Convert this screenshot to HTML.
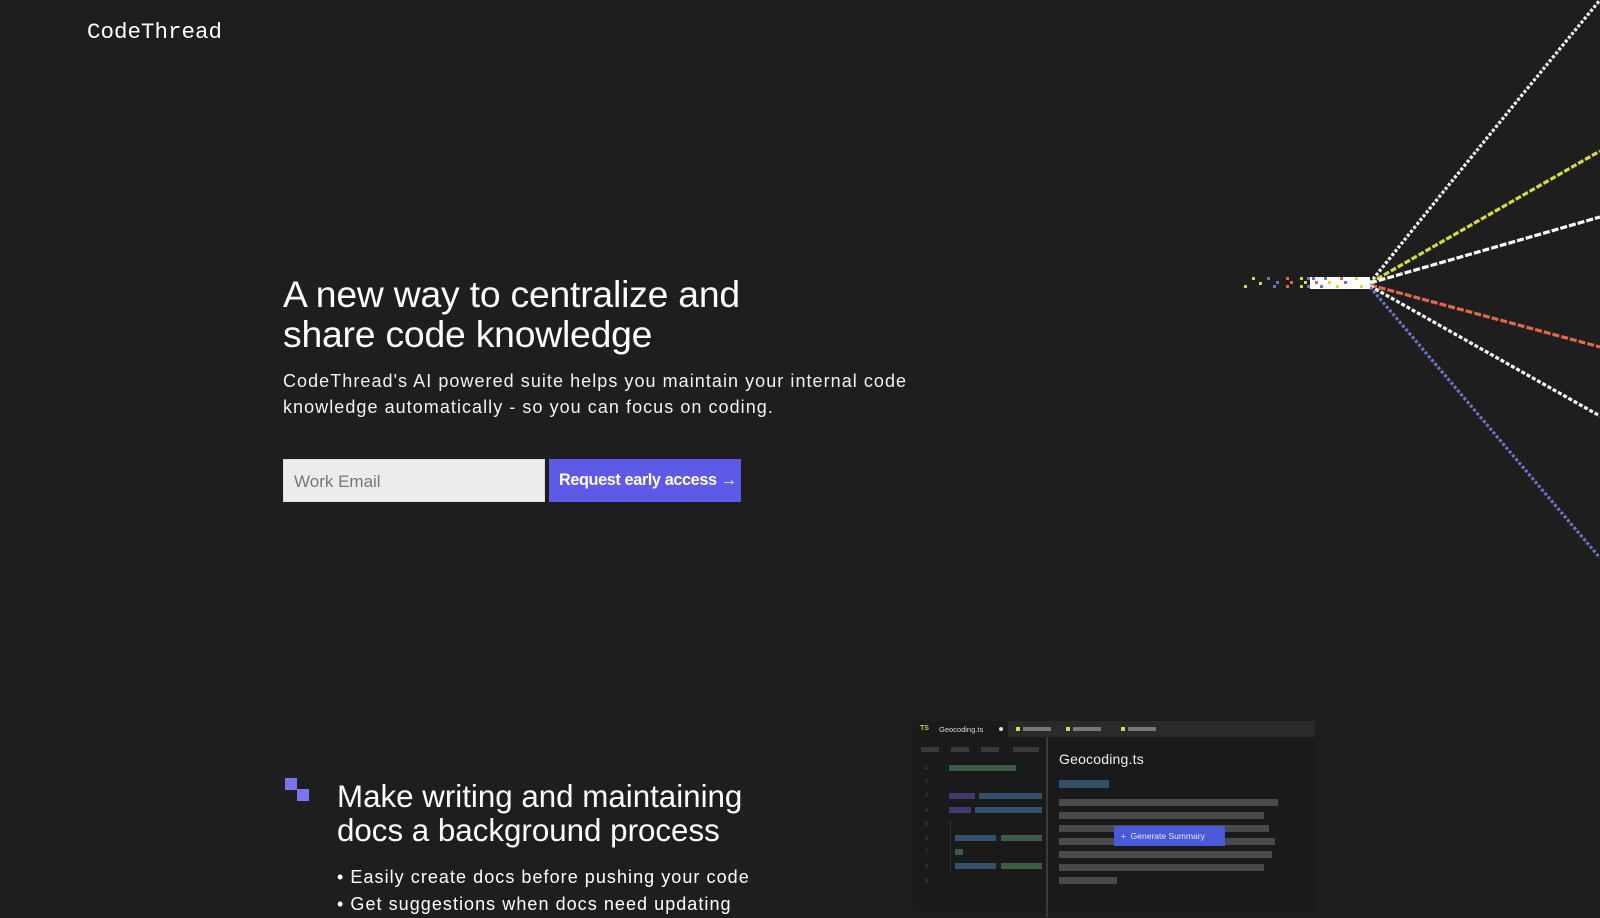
<!DOCTYPE html>
<html><head><meta charset="utf-8"><style>
*{margin:0;padding:0;box-sizing:border-box}
body{width:1600px;height:900px;overflow:hidden;background:#1e1e1e;color:#fff;font-family:"Liberation Sans",Arial,sans-serif;position:relative}
.abs{position:absolute}
.logo{left:87px;top:19px;font-family:"Liberation Mono",monospace;font-size:22.5px;letter-spacing:0px;color:#fff}
h1{position:absolute;left:283px;top:274px;font-size:37.3px;font-weight:400;line-height:40px;letter-spacing:-0.2px}
.p{left:283px;top:368px;font-size:18px;line-height:26px;letter-spacing:1.05px;color:#f2f2f2}
.inp{left:283px;top:459px;width:262px;height:43px;background:#ececec;border:1px solid #ddd;color:#777;font-size:17px;padding:12px 10px}
.btn{left:549px;top:459px;width:192px;height:43px;background:#5d5ae8;color:#fff;font-weight:700;font-size:16.3px;padding:12px 0 0 10px;letter-spacing:-0.4px;white-space:nowrap}
h2{position:absolute;left:337px;top:780px;font-size:31.3px;font-weight:400;line-height:34px}
.b{left:337px;top:864px;font-size:18px;line-height:27px;letter-spacing:1.05px;white-space:nowrap}
.panel{left:913px;top:721px;width:402px;height:190px;background:#1a1a1a}
.bar{position:absolute;height:7px;background:#4a4a4a}
</style></head><body>
<div class="abs logo">CodeThread</div>
<h1>A new way to centralize and<br>share code knowledge</h1>
<div class="abs p">CodeThread's AI powered suite helps you maintain your internal code<br>knowledge automatically - so you can focus on coding.</div>
<div class="abs inp">Work Email</div>
<div class="abs btn">Request early access →</div>

<svg class="abs" style="left:0;top:0" width="1600" height="600">
<g fill="none" stroke-width="3.2">
<path d="M1370 283 Q1460 170 1600 0" stroke="#fff" stroke-dasharray="3 2"/>
<path d="M1370 283 L1600 151" stroke="#d4d94a" stroke-dasharray="6 2"/>
<path d="M1370 283 L1600 217" stroke="#fff" stroke-dasharray="7 2"/>
<path d="M1370 285 L1600 347" stroke="#e0684a" stroke-dasharray="7 2"/>
<path d="M1370 286 L1600 416" stroke="#fff" stroke-dasharray="4 2"/>
<path d="M1370 287 L1600 558" stroke="#6a72c8" stroke-dasharray="3 2"/>
</g>
<rect x="1310" y="277" width="60" height="12" fill="#fff"/>
<g>
<rect x="1312" y="277" width="3" height="3" fill="#6a72c8"/><rect x="1315" y="281" width="3" height="3" fill="#e0684a"/><rect x="1324" y="277" width="3" height="3" fill="#6a72c8"/><rect x="1328" y="281" width="3" height="3" fill="#d4d94a"/><rect x="1340" y="277" width="3" height="3" fill="#e0684a"/><rect x="1344" y="281" width="3" height="3" fill="#6a72c8"/><rect x="1355" y="277" width="3" height="3" fill="#d4d94a"/><rect x="1360" y="285" width="3" height="3" fill="#d4d94a"/><rect x="1320" y="285" width="3" height="3" fill="#6a72c8"/><rect x="1336" y="285" width="3" height="3" fill="#d4d94a"/>
<rect x="1244" y="285" width="3" height="3" fill="#d4d94a"/><rect x="1252" y="277" width="3" height="3" fill="#d4d94a"/><rect x="1259" y="282" width="3" height="3" fill="#d4d94a"/><rect x="1267" y="277" width="3" height="3" fill="#6a72c8"/><rect x="1273" y="285" width="3" height="3" fill="#6a72c8"/><rect x="1276" y="281" width="3" height="3" fill="#6a72c8"/><rect x="1286" y="277" width="3" height="3" fill="#e0684a"/><rect x="1290" y="281" width="3" height="3" fill="#e0684a"/><rect x="1286" y="285" width="3" height="3" fill="#e0684a"/><rect x="1300" y="277" width="3" height="3" fill="#d4d94a"/><rect x="1304" y="281" width="3" height="3" fill="#d4d94a"/><rect x="1300" y="285" width="3" height="3" fill="#d4d94a"/><rect x="1307" y="277" width="3" height="3" fill="#6a72c8"/><rect x="1307" y="285" width="3" height="3" fill="#6a72c8"/>
</g>
</svg>

<div class="abs" style="left:285px;top:778px;width:12px;height:12px;background:#7b73f0"></div>
<div class="abs" style="left:297px;top:789px;width:12px;height:12px;background:#7b73f0"></div>
<h2>Make writing and maintaining<br>docs a background process</h2>
<div class="abs b">• Easily create docs before pushing your code<br>• Get suggestions when docs need updating</div>

<div class="abs panel">
 <div class="abs" style="left:0;top:0;width:402px;height:16px;background:#2a2a2a"></div>
 <div class="abs" style="left:0;top:0;width:95px;height:16px;background:#1a1a1a"></div>
 <div class="abs" style="left:7px;top:4px;font-size:7px;color:#c9c94a;font-weight:700">TS</div>
 <div class="abs" style="left:26px;top:4px;font-size:7.5px;color:#ddd">Geocoding.ts</div>
 <div class="abs" style="left:86px;top:6px;width:4px;height:4px;border-radius:2px;background:#ddd"></div>
 <div class="abs" style="left:103px;top:6px;width:4px;height:4px;background:#d4d94a"></div><div class="bar" style="left:110px;top:6px;width:28px;height:4px;background:#777"></div>
 <div class="abs" style="left:153px;top:6px;width:4px;height:4px;background:#d4d94a"></div><div class="bar" style="left:160px;top:6px;width:28px;height:4px;background:#777"></div>
 <div class="abs" style="left:208px;top:6px;width:4px;height:4px;background:#d4d94a"></div><div class="bar" style="left:215px;top:6px;width:28px;height:4px;background:#777"></div>
 <div class="abs" style="left:133px;top:16px;width:2px;height:180px;background:#3a3a3a"></div>
 <div class="bar" style="left:8px;top:26px;width:18px;height:5px;background:#3a3a3a"></div><div class="bar" style="left:38px;top:26px;width:18px;height:5px;background:#3a3a3a"></div><div class="bar" style="left:68px;top:26px;width:18px;height:5px;background:#3a3a3a"></div><div class="bar" style="left:100px;top:26px;width:26px;height:5px;background:#3a3a3a"></div>
 <div class="abs" style="left:12px;top:40px;font-size:6px;line-height:14.2px;color:#444">1<br>2<br>3<br>4<br>5<br>6<br>7<br>8<br>9</div>
 <div class="bar" style="left:36px;top:44px;width:67px;height:6px;background:#3d5a48"></div>
 <div class="bar" style="left:36px;top:72px;width:26px;height:6px;background:#3f3b6a"></div><div class="bar" style="left:66px;top:72px;width:63px;height:6px;background:#34506a"></div>
 <div class="bar" style="left:36px;top:86px;width:22px;height:6px;background:#3f3b6a"></div><div class="bar" style="left:62px;top:86px;width:67px;height:6px;background:#34506a"></div>
 <div class="abs" style="left:37px;top:100px;width:1px;height:50px;background:#333"></div>
 <div class="bar" style="left:42px;top:114px;width:41px;height:6px;background:#34506a"></div><div class="bar" style="left:88px;top:114px;width:41px;height:6px;background:#3d5a48"></div>
 <div class="bar" style="left:42px;top:128px;width:8px;height:6px;background:#3d5a48"></div>
 <div class="bar" style="left:42px;top:142px;width:41px;height:6px;background:#34506a"></div><div class="bar" style="left:88px;top:142px;width:41px;height:6px;background:#3d5a48"></div>
 <div class="abs" style="left:146px;top:30px;font-size:14px;color:#eee;letter-spacing:0.2px">Geocoding.ts</div>
 <div class="bar" style="left:146px;top:59px;width:50px;height:8px;background:#34506a"></div>
 <div class="bar" style="left:146px;top:78px;width:219px"></div>
 <div class="bar" style="left:146px;top:91px;width:205px"></div>
 <div class="bar" style="left:146px;top:104px;width:210px"></div>
 <div class="bar" style="left:146px;top:117px;width:216px"></div>
 <div class="bar" style="left:146px;top:130px;width:213px"></div>
 <div class="bar" style="left:146px;top:143px;width:205px"></div>
 <div class="bar" style="left:146px;top:156px;width:58px"></div>
 <div class="abs" style="left:201px;top:105px;width:111px;height:20px;background:#4a5ad8;color:#e8e8ff;font-size:8.5px;padding:5px 0 0 7px;white-space:nowrap">+&nbsp; Generate Summary</div>
</div>
</body></html>
